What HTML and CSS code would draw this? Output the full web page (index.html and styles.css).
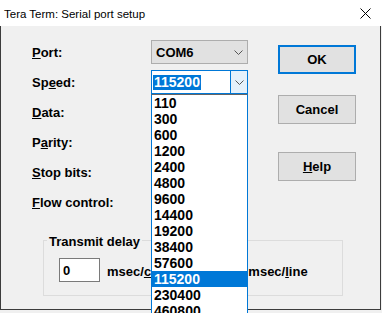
FILE: index.html
```html
<!DOCTYPE html>
<html lang="en">

<head>
    <meta charset="UTF-8">
    <meta name="viewport" content="width=device-width, initial-scale=1.0">
    <title>Tera Term: Serial port setup</title>
    <link rel="stylesheet" href="styles.css">
</head>

<body>
    <div class="window">
        <div class="titlebar">
            <span class="titlebar__text">Tera Term: Serial port setup</span>
            <svg class="titlebar__close" width="11" height="11" viewBox="0 0 11 11">
                <path d="M0.5 0.5 L10.5 10.5 M10.5 0.5 L0.5 10.5" stroke="#000" stroke-width="1" fill="none" />
            </svg>
        </div>

        <div class="client">
            <div class="form">
                <div class="fields">
                    <div class="field">
                        <span class="field__label"><u>P</u>ort:</span>
                        <div class="combo">
                            <span class="combo__value">COM6</span>
                            <span class="combo__button">
                                <svg width="9" height="5" viewBox="0 0 9 5">
                                    <polyline points="0.5,0.5 4.5,4.5 8.5,0.5" stroke="#555" fill="none" />
                                </svg>
                            </span>
                        </div>
                    </div>
                    <div class="field">
                        <span class="field__label">Sp<u>e</u>ed:</span>
                        <div class="combo combo--open">
                            <span class="combo__value combo__value--digits"><span class="combo__selection">115200</span></span>
                            <span class="combo__button combo__button--hot">
                                <svg width="9" height="5" viewBox="0 0 9 5">
                                    <polyline points="0.5,0.5 4.5,4.5 8.5,0.5" stroke="#555" fill="none" />
                                </svg>
                            </span>
                        </div>
                    </div>
                    <div class="field"><span class="field__label"><u>D</u>ata:</span></div>
                    <div class="field"><span class="field__label">P<u>a</u>rity:</span></div>
                    <div class="field"><span class="field__label"><u>S</u>top bits:</span></div>
                    <div class="field"><span class="field__label"><u>F</u>low control:</span></div>
                </div>

                <div class="buttons">
                    <button class="btn btn--default">OK</button>
                    <button class="btn btn--cancel">Cancel</button>
                    <button class="btn btn--help"><u>H</u>elp</button>
                </div>
            </div>

            <fieldset class="group">
                <legend class="group__title">Transmit delay</legend>
                <div class="group__row">
                    <input class="group__input" type="text" value="0">
                    <span class="group__unit">msec/<u>c</u>har</span>
                    <span class="group__unit group__unit--line">msec/<u>l</u>ine</span>
                </div>
            </fieldset>
        </div>

        <ul class="droplist">
            <li class="droplist__item">110</li>
            <li class="droplist__item">300</li>
            <li class="droplist__item">600</li>
            <li class="droplist__item">1200</li>
            <li class="droplist__item">2400</li>
            <li class="droplist__item">4800</li>
            <li class="droplist__item">9600</li>
            <li class="droplist__item">14400</li>
            <li class="droplist__item">19200</li>
            <li class="droplist__item">38400</li>
            <li class="droplist__item">57600</li>
            <li class="droplist__item droplist__item--selected">115200</li>
            <li class="droplist__item">230400</li>
            <li class="droplist__item">460800</li>
        </ul>
    </div>
</body>

</html>
```

FILE: styles.css
```css
* {
    box-sizing: border-box;
}

body {
    margin: 0;
    padding: 0;
    background-color: #f0f0f0;
    font-family: 'Liberation Sans', Arial, sans-serif;
    color: #000000;
}

.window {
    position: relative;
    width: 382px;
    height: 313px;
    overflow: hidden;
}

.titlebar {
    display: flex;
    align-items: center;
    justify-content: space-between;
    height: 26px;
    padding: 0 11px 0 4px;
    background-color: #ffffff;
}

.titlebar__text {
    font-size: 11.5px;
    padding-top: 1px;
}

.titlebar__close {
    display: block;
    margin-top: 1px;
}

.client {
    width: 381px;
    height: 284px;
    padding-top: 11px;
    background-color: #f0f0f0;
    border-left: 1px solid #3c3c3c;
    border-right: 1px solid #3c3c3c;
    border-bottom: 1px solid #3c3c3c;
}

.form {
    display: flex;
    align-items: flex-start;
}

.fields {
    display: flex;
    flex-direction: column;
    padding-left: 31px;
}

.field {
    display: flex;
    align-items: center;
    height: 30px;
}

.field__label {
    width: 119px;
    font-size: 13px;
    font-weight: bold;
}

.combo {
    display: flex;
    align-items: center;
    width: 97px;
    height: 24px;
    background-color: #e1e1e1;
    border: 1px solid #adadad;
}

.combo__value {
    flex: 1;
    padding-left: 4px;
    font-size: 13px;
    font-weight: bold;
}

.combo__value--digits {
    padding-left: 1px;
    font-size: 14px;
}

.combo__selection {
    display: inline-block;
    padding: 0 1px;
    line-height: 15px;
    background-color: #0078d7;
    color: #ffffff;
}

.combo__button {
    display: flex;
    align-items: center;
    justify-content: center;
    width: 17px;
    height: 100%;
    padding-top: 1px;
}

.combo__button svg {
    display: block;
}

.combo--open {
    background-color: #ffffff;
    border-color: #0078d7;
}

.combo__button--hot {
    background-color: #e5f1fb;
    border-left: 1px solid #0078d7;
}

.buttons {
    display: flex;
    flex-direction: column;
    margin-left: 30px;
    margin-top: 8px;
}

.btn {
    width: 78px;
    height: 29px;
    padding: 0;
    background-color: #e1e1e1;
    border: 1px solid #adadad;
    font-family: 'Liberation Sans', Arial, sans-serif;
    font-size: 13px;
    font-weight: bold;
    color: #000000;
}

.btn--default {
    border: 2px solid #0078d7;
}

.btn--cancel {
    margin-top: 21px;
}

.btn--help {
    margin-top: 28px;
}

.group {
    width: 300px;
    margin: 15px 0 0 42px;
    padding: 0;
    border: 1px solid #dcdcdc;
}

.group__title {
    margin-left: 3px;
    padding: 3px 2px 0;
    font-size: 13px;
    line-height: 14px;
    font-weight: bold;
}

.group__row {
    display: flex;
    align-items: center;
    padding: 9px 0 13px 15px;
}

.group__input {
    width: 41px;
    height: 24px;
    margin: 0;
    padding: 0 0 0 3px;
    border: 1px solid #7a7a7a;
    background-color: #ffffff;
    font-family: 'Liberation Sans', Arial, sans-serif;
    font-size: 13px;
    font-weight: bold;
    color: #000000;
    outline: none;
}

.group__unit {
    margin-left: 7px;
    padding-top: 3px;
    font-size: 13px;
    font-weight: bold;
}

.group__unit--line {
    margin-left: 77px;
}

/* popup list of the open speed combo, drawn over the dialog */
.droplist {
    position: absolute;
    left: 151px;
    top: 94px;
    width: 97px;
    height: 240px;
    margin: 0;
    padding: 0;
    list-style: none;
    background-color: #ffffff;
    border-left: 1px solid #0078d7;
    border-right: 1px solid #0078d7;
    border-top: 1px solid #646464;
}

.droplist__item {
    height: 16px;
    padding-left: 2px;
    font-size: 14px;
    line-height: 16px;
    font-weight: bold;
}

.droplist__item--selected {
    background-color: #0078d7;
    color: #ffffff;
}
```
